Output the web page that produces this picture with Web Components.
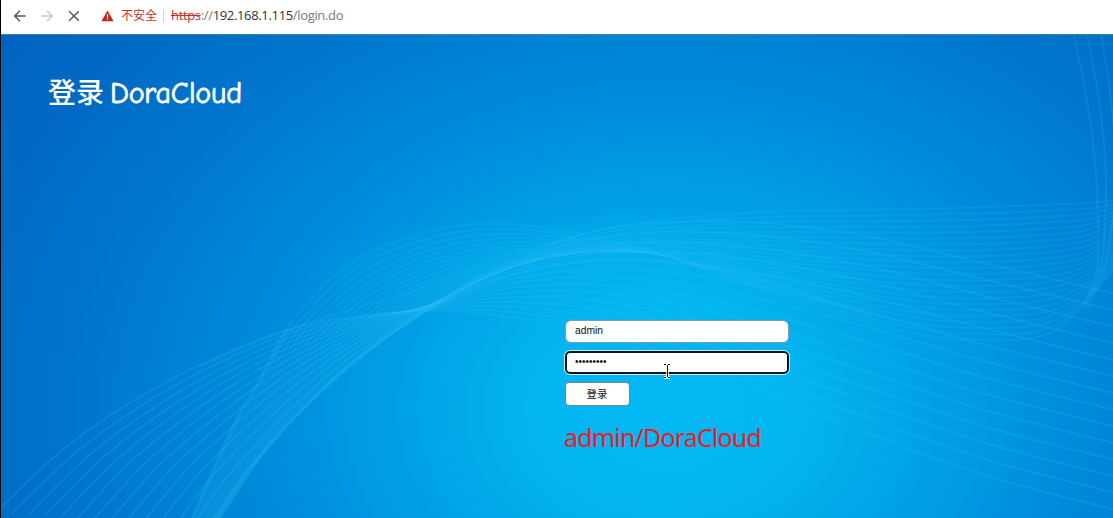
<!DOCTYPE html>
<html lang="zh-CN">
<head>
<meta charset="utf-8">
<title>登录 DoraCloud</title>
<style>
body { margin: 0; width: 1113px; height: 518px; overflow: hidden; font-family: "Liberation Sans", "Noto Sans CJK SC", sans-serif; }
</style>
</head>
<body>
<login-window></login-window>
<script>
const define = (name, html, setup) => {
  const tpl = document.createElement('template');
  tpl.innerHTML = html;
  customElements.define(name, class extends HTMLElement {
    constructor() {
      super();
      this.attachShadow({ mode: 'open' }).append(tpl.content.cloneNode(true));
      if (setup) setup(this.shadowRoot);
    }
  });
};

define('address-bar', `
<style>
:host { display: flex; align-items: center; height: 34px; box-sizing: border-box; padding: 0 0 3px 11px; background: #fff; font: 13px "Open Sans", "Noto Sans CJK SC", sans-serif; color: #777b80; }
svg { display: block; flex: none; }
.nav { display: flex; gap: 11px; }
.warn { margin-left: 19px; }
.unsafe { color: #c5312a; font-size: 12px; margin-left: 7px; white-space: nowrap; line-height: 20px; }
.bar { width: 1px; height: 12px; background: #cfd1d3; margin: 0 7px 0 6px; }
.url { white-space: nowrap; letter-spacing: -.34px; line-height: 20px; position: relative; top: -1px; }
.scheme { color: #c5312a; text-decoration: line-through; }
.host { color: #303236; }
</style>
<div class="nav">
<svg width="16" height="16" viewBox="0 0 16 16" fill="none" stroke="#55585c" stroke-width="1.5"><path d="M13.6 8H3M8 2.7 2.7 8 8 13.3"/></svg>
<svg width="16" height="16" viewBox="0 0 16 16" fill="none" stroke="#c6c8ca" stroke-width="1.5"><path d="M2.4 8H13M8 2.7 13.3 8 8 13.3"/></svg>
<svg width="16" height="16" viewBox="0 0 16 16" fill="none" stroke="#55585c" stroke-width="1.5"><path d="m3.2 3.2 9.6 9.6M12.8 3.2l-9.6 9.6"/></svg>
</div>
<svg class="warn" width="13" height="12" viewBox="0 0 13 12"><path d="M6.5.5 12.6 11.2H.4Z" fill="#c5221f"/><path d="M6.5 4v3.5M6.5 8.4v1.4" stroke="#fff" stroke-width="1.3"/></svg>
<span class="unsafe">不安全</span><span class="bar"></span>
<span class="url"><span class="scheme">https</span>://<span class="host">192.168.1.115</span>/login.do</span>
`);

define('wave-backdrop', `
<style>
:host { display: block; width: 1112px; height: 484px; background:
  radial-gradient(ellipse 330px 60px at 620px 235px, rgba(0,190,245,.3), rgba(0,190,245,0)),
  radial-gradient(ellipse 520px 400px at 665px 376px, #04b9f4 0%, #03b4f1 27%, #02aceb 36%, #009fe5 53%, #0093df 68%, #0089d9 82%, #0080d4 97%, #0073cb 117%, #0068c3 142%, #0063bf 160%);
}
svg { display: block; }
</style>
<svg width="1112" height="484" viewBox="1 34 1112 484" fill="none"></svg>
`, root => {
  const svg = root.querySelector('svg');
  // Smooth curve through a list of points (Catmull-Rom converted to cubic segments).
  const curve = p => {
    let d = `M${p[0]}`;
    for (let i = 0; i < p.length - 1; i++) {
      const a = p[Math.max(0, i - 1)], b = p[i], c = p[i + 1], e = p[Math.min(p.length - 1, i + 2)];
      d += `C${b[0] + (c[0] - a[0]) / 6},${b[1] + (c[1] - a[1]) / 6} ${c[0] - (e[0] - b[0]) / 6},${c[1] - (e[1] - b[1]) / 6} ${c}`;
    }
    return d;
  };
  const line = (pts, opacity, width = 1.7) => {
    const el = document.createElementNS('http://www.w3.org/2000/svg', 'path');
    el.setAttribute('d', curve(pts));
    el.setAttribute('stroke', '#38c4fb');
    el.setAttribute('stroke-opacity', opacity);
    el.setAttribute('stroke-width', width);
    svg.append(el);
  };
  // Blends three guide curves; the middle one is reached at t = 0.5.
  const family = (from, mid, to, n, opacity) => {
    for (let i = 0; i < n; i++) {
      const t = i / (n - 1), u = 1 - t;
      line(from.map((p, k) => [0, 1].map(j => {
        const a = p[j], b = to[k][j], m = mid ? mid[k][j] : (a + b) / 2;
        return u * u * a + 2 * u * t * (2 * m - (a + b) / 2) + t * t * b;
      })), opacity);
    }
  };
  // Fan rising from the lower left and spreading out to the right edge.
  family(
    [[-5,513],[60,452],[123,407],[200,365],[287,330],[360,316],[440,311],[510,317],[600,334],[720,371],[850,426],[980,474],[1120,511]],
    null,
    [[210,525],[238,483],[267,448],[310,402],[355,360],[405,325],[460,288],[530,252],[610,228],[720,221],[850,233],[980,262],[1120,295]],
    14, .2);
  // Ribbon twisting from the bottom through the centre towards the right.
  family(
    [[189,525],[233,427],[260,380],[287,328],[345,267],[405,239],[475,224],[555,229],[650,250],[787,298],[911,333],[990,340],[1045,335],[1080,309],[1120,262]],
    [[204,525],[250,445],[284,400],[325,356],[385,312],[445,281],[505,264],[580,253],[670,251],[790,263],[911,273],[990,274],[1050,270],[1088,260],[1120,234]],
    [[216,525],[267,448],[300,412],[345,371],[405,325],[465,288],[525,257],[600,230],[690,217],[790,211],[911,209],[990,207],[1040,205],[1085,203],[1120,200]],
    23, .15);
  for (let i = 0; i < 3; i++)
    line([[1072+i*14,28],[1087+i*12,100],[1096+i*10,175],[1098+i*6,240],[1096+i*3,275],[1082+i*3,309]], .18);
  line([[216,520],[267,448],[333,380],[400,327],[450,299],[500,278],[550,265],[600,259],[650,260],[700,266],[750,276],[800,292],[870,315]], .13, 4);
  line([[192,518],[233,427],[260,380],[287,330]], .12, 4);
  line([[200,366],[287,330],[400,295],[500,258],[580,236]], .09, 3);
});

define('brand-title', `
<style>
:host { display: flex; align-items: baseline; color: #fff; white-space: nowrap; height: 40px; line-height: 40px; }
.zh { font: 500 28px/40px "Noto Sans CJK SC", sans-serif; }
.en { font: 500 30px/40px "Comic Sans MS", "Comic Neue", "Noto Sans", sans-serif; margin-left: 6px; letter-spacing: -.2px; -webkit-text-stroke: .8px #fff; }
</style>
<span class="zh">登录</span><span class="en">DoraCloud</span>
`);

define('text-entry', `
<style>
:host { display: flex; align-items: center; box-sizing: border-box; width: 224px; height: 23px; padding: 0 0 2px 9px; background: #fbfeff; border: 1px solid #8298a3; border-radius: 6px; font: 10.3px "Liberation Sans", sans-serif; color: #111; }
:host([focused]) { background: #fff; border: 2px solid #101418; padding-left: 8px; border-radius: 5px; outline: 1px solid #c4edff; }
</style>
<slot></slot>
`);

define('password-dots', `
<style>
:host { display: block; font: 10px/12px "Liberation Sans", sans-serif; color: #111; }
</style><slot></slot>
`);

define('push-button', `
<style>
:host { display: flex; align-items: center; justify-content: center; box-sizing: border-box; width: 65px; height: 24px; background: #fff; border: 1px solid #71858e; border-radius: 4px; color: #111; font: 10.5px/20px "Noto Sans CJK SC", sans-serif; padding-right: 1px; }
</style><slot></slot>
`);

define('text-cursor', `
<style>:host { display: block; position: absolute; left: 98px; top: 43px; }</style>
<svg width="8" height="16" viewBox="0 0 8 16" fill="none" style="display:block"><path d="M1 1.5h6M1 14.5h6M4.5 2v12" stroke="#fff" stroke-width="2.6"/><path d="M1 1.5h2M5 1.5h2M1 14.5h2M5 14.5h2M4.5 2v12" stroke="#111"/></svg>
`);

define('login-form', `
<style>
:host { display: flex; flex-direction: column; align-items: flex-start; position: relative; width: 225px; }
text-entry + text-entry { margin-top: 8px; }
push-button { margin-top: 8px; }
.hint { color: #ee1c25; font: 25px/34px "Noto Sans", sans-serif; white-space: nowrap; margin: 14px 0 0 -1px; letter-spacing: -.83px; }
</style>
<text-entry>admin</text-entry>
<text-entry focused><password-dots>•••••••••</password-dots></text-entry>
<push-button>登录</push-button>
<div class="hint">admin/DoraCloud</div>
<text-cursor></text-cursor>
`);

define('login-window', `
<style>
:host { display: block; box-sizing: border-box; width: 1113px; height: 518px; border-left: 1px solid #000; }
.page { display: grid; height: 484px; }
wave-backdrop, .content { grid-area: 1 / 1; }
.content { z-index: 1; border-top: 1px solid #3482b0; }
brand-title { margin: 36px 0 0 47px; }
login-form { margin: 209px 0 0 564px; }
</style>
<address-bar></address-bar>
<div class="page">
  <wave-backdrop></wave-backdrop>
  <div class="content"><brand-title></brand-title><login-form></login-form></div>
</div>
`);
</script>
</body>
</html>
